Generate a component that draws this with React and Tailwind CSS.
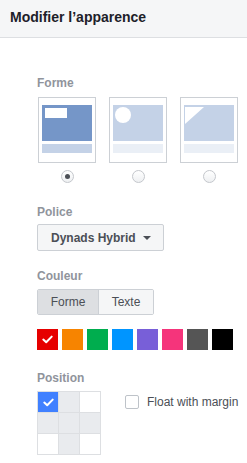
import React, {useState} from "react";

const swatches = ["#e60000", "#f78400", "#00ad4e", "#0095ff", "#785fd8", "#f5347b", "#555555", "#000000"];
const gridCells = ["sel", "gray", "white", "gray", "gray", "gray", "white", "gray", "white"];

function Check({className}) {
    return (
        <svg className={className} width="11" height="9" viewBox="0 0 11 9" fill="none">
            <path d="M1.3 4.6 L4.2 7.3 L9.7 1.6" stroke="white" strokeWidth="2" strokeLinecap="round" strokeLinejoin="round" />
        </svg>
    );
}

function Label({children}) {
    return <p className="text-[12px] leading-4 font-bold text-[#90949c]">{children}</p>;
}

function Radio({checked, onClick}) {
    return (
        <div onClick={onClick} className="w-[13px] h-[13px] rounded-full border border-[#c4c7cc] bg-gradient-to-b from-white to-[#eef0f2] flex items-center justify-center">
            {checked ? <div className="w-[5px] h-[5px] rounded-full bg-[#4b4f56]" /> : null}
        </div>
    );
}

function ShapeCard({variant, selected}) {
    const main = selected ? "bg-[#7596c8]" : "bg-[#c4d2e7]";
    const bar = selected ? "bg-[#c4d2e7]" : "bg-[#eaeff6]";
    return (
        <div className="w-[58px] h-[66px] border border-[#ccd0d5] bg-white px-[3px] pt-[7px]">
            <div className={"h-[36px] " + main}>
                {variant === 0 && <div className="pl-[3px] pt-[3px]"><div className="w-[22px] h-[10px] bg-white" /></div>}
                {variant === 1 && <div className="pl-[2px] pt-[2px]"><div className="w-[16px] h-[16px] rounded-full bg-white" /></div>}
                {variant === 2 && (
                    <div className="pl-px pt-[2px]">
                        <svg width="19" height="17" viewBox="0 0 19 17" className="block"><polygon points="0,0 19,0 0,17" fill="white" /></svg>
                    </div>
                )}
            </div>
            <div className={"h-[9px] mt-[3px] " + bar} />
        </div>
    );
}

function App() {
    const [shape, setShape] = useState(0);
    const [mode, setMode] = useState("forme");
    const [color, setColor] = useState(0);
    const [pos, setPos] = useState(0);
    const [floatMargin, setFloatMargin] = useState(false);

    return (
        <div className="w-[247px] h-[463px] bg-white overflow-hidden" style={{fontFamily: '"Liberation Sans", Arial, sans-serif'}}>
            <div className="h-[38px] bg-[#f5f6f7] border-b border-[#dddfe2] flex items-center pl-[10px] pb-[2px]">
                <h1 className="text-[14px] font-bold text-[#1d2129]">Modifier l’apparence</h1>
            </div>

            <div className="pl-[37px]">
                <div className="pt-[37px]">
                    <Label>Forme</Label>
                    <div className="flex gap-[13px] ml-px mt-[6px]">
                        {[0, 1, 2].map(i => (
                            <div key={i} className="flex flex-col items-center">
                                <ShapeCard variant={i} selected={shape === i} />
                                <div className="mt-[7px]">
                                    <Radio checked={shape === i} onClick={() => setShape(i)} />
                                </div>
                            </div>
                        ))}
                    </div>
                </div>

                <div className="mt-[21px]">
                    <Label>Police</Label>
                    <button className="mt-[4px] w-[127px] h-[27px] border border-[#ccd0d5] bg-[#f5f6f7] rounded-[2px] flex items-center justify-between pl-[13px] pr-[12px]">
                        <span className="text-[12px] font-bold text-[#4b4f56]">Dynads Hybrid</span>
                        <svg width="8" height="4" viewBox="0 0 8 4"><polygon points="0,0 8,0 4,4" fill="#4b4f56" /></svg>
                    </button>
                </div>

                <div className="mt-[17px]">
                    <Label>Couleur</Label>
                    <div className="mt-[5px] flex w-[117px] h-[26px] border border-[#ccd0d5] rounded-[2px] overflow-hidden">
                        <button onClick={() => setMode("forme")} className={"w-[61px] text-[12px] text-[#4b4f56] border-r border-[#ccd0d5] " + (mode === "forme" ? "bg-[#dddfe2]" : "bg-[#f5f6f7]")}>Forme</button>
                        <button onClick={() => setMode("texte")} className={"flex-1 text-[12px] text-[#4b4f56] " + (mode === "texte" ? "bg-[#dddfe2]" : "bg-[#f5f6f7]")}>Texte</button>
                    </div>
                    <div className="mt-[14px] flex gap-[4px]">
                        {swatches.map((c, i) => (
                            <div key={c} onClick={() => setColor(i)} className="w-[21px] h-[21px] flex items-center justify-center" style={{backgroundColor: c}}>
                                {color === i ? <Check /> : null}
                            </div>
                        ))}
                    </div>
                </div>

                <div className="mt-[20px]">
                    <Label>Position</Label>
                    <div className="mt-[5px] flex items-start">
                        <div className="grid grid-cols-3 gap-px p-px bg-[#dddfe2] w-[64px]">
                            {gridCells.map((c, i) => (
                                <div key={i} onClick={() => setPos(i)} className={"h-[20px] flex items-center justify-center " + (pos === i ? "bg-[#4080ff]" : c === "gray" ? "bg-[#e9ebee]" : "bg-white")}>
                                    {pos === i ? <Check /> : null}
                                </div>
                            ))}
                        </div>
                        <label className="ml-[24px] mt-[2px] flex items-center gap-[8px] cursor-pointer" onClick={() => setFloatMargin(!floatMargin)}>
                            <span className={"w-[14px] h-[14px] rounded-[2px] border border-[#bec3c9] " + (floatMargin ? "bg-[#4080ff]" : "bg-white")} />
                            <span className="text-[12px] text-[#4b4f56]">Float with margin</span>
                        </label>
                    </div>
                </div>
            </div>
        </div>
    );
}

export default App;
